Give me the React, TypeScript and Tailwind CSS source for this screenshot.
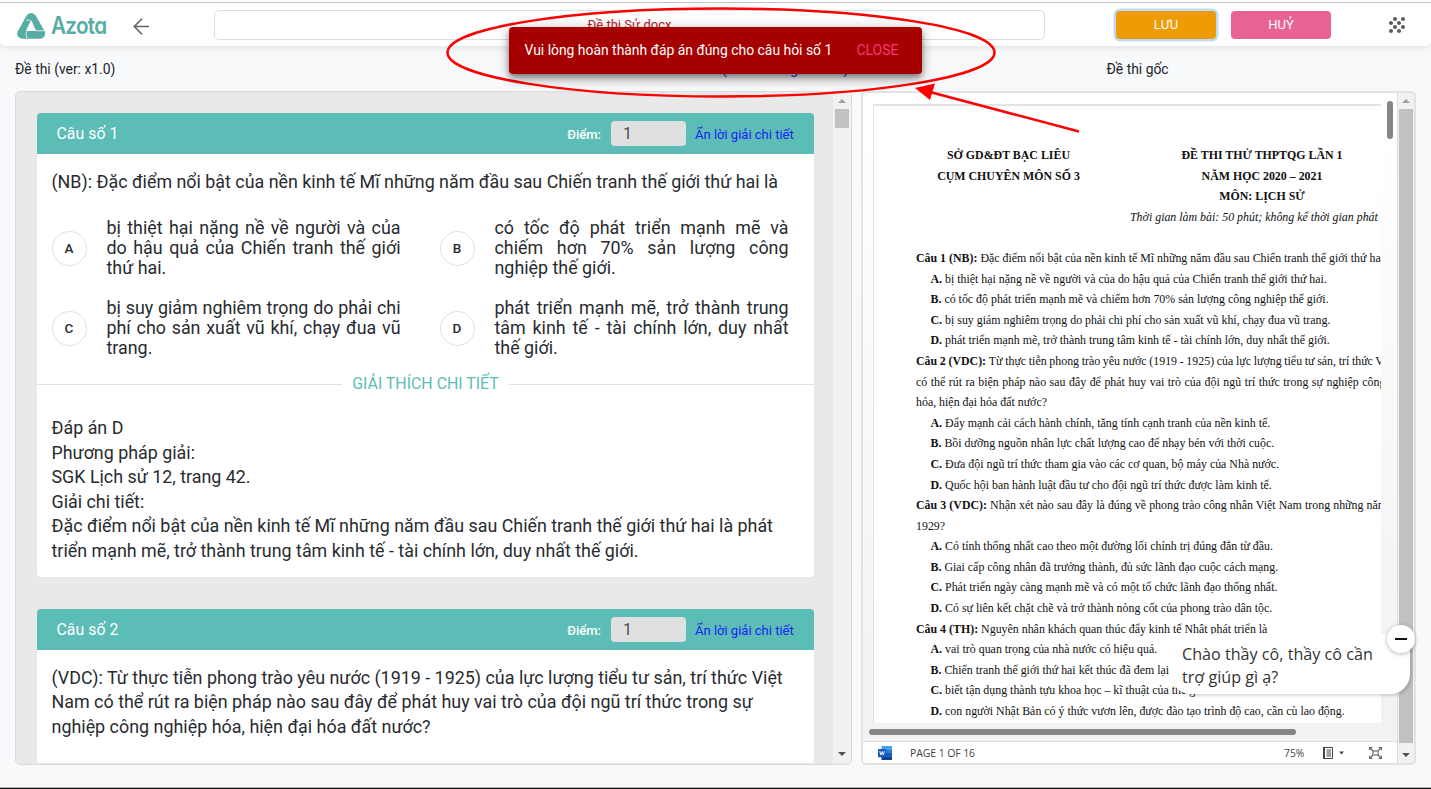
import React from 'react';
import { MdGrain } from 'react-icons/md';

type Option = { letter: string; text: string };

const options: Option[] = [
  { letter: 'A', text: 'bị thiệt hại nặng nề về người và của do hậu quả của Chiến tranh thế giới thứ hai.' },
  { letter: 'B', text: 'có tốc độ phát triển mạnh mẽ và chiếm hơn 70% sản lượng công nghiệp thế giới.' },
  { letter: 'C', text: 'bị suy giảm nghiêm trọng do phải chi phí cho sản xuất vũ khí, chạy đua vũ trang.' },
  { letter: 'D', text: 'phát triển mạnh mẽ, trở thành trung tâm kinh tế - tài chính lớn, duy nhất thế giới.' },
];

type DocLine = { lead?: string; text: string; indent?: boolean; spacing?: string };

const docLines: DocLine[] = [
  { lead: 'Câu 1 (NB):', text: 'Đặc điểm nổi bật của nền kinh tế Mĩ những năm đầu sau Chiến tranh thế giới thứ hai là' },
  { lead: 'A.', text: 'bị thiệt hại nặng nề về người và của do hậu quả của Chiến tranh thế giới thứ hai.', indent: true },
  { lead: 'B.', text: 'có tốc độ phát triển mạnh mẽ và chiếm hơn 70% sản lượng công nghiệp thế giới.', indent: true },
  { lead: 'C.', text: 'bị suy giảm nghiêm trọng do phải chi phí cho sản xuất vũ khí, chạy đua vũ trang.', indent: true },
  { lead: 'D.', text: 'phát triển mạnh mẽ, trở thành trung tâm kinh tế - tài chính lớn, duy nhất thế giới.', indent: true },
  { lead: 'Câu 2 (VDC):', text: 'Từ thực tiễn phong trào yêu nước (1919 - 1925) của lực lượng tiểu tư sản, trí thức Việt Nam', spacing: '[word-spacing:-0.3px]' },
  { text: 'có thể rút ra biện pháp nào sau đây để phát huy vai trò của đội ngũ trí thức trong sự nghiệp công nghiệp', spacing: '[word-spacing:0.55px]' },
  { text: 'hóa, hiện đại hóa đất nước?' },
  { lead: 'A.', text: 'Đẩy mạnh cải cách hành chính, tăng tính cạnh tranh của nền kinh tế.', indent: true },
  { lead: 'B.', text: 'Bồi dưỡng nguồn nhân lực chất lượng cao để nhạy bén với thời cuộc.', indent: true },
  { lead: 'C.', text: 'Đưa đội ngũ trí thức tham gia vào các cơ quan, bộ máy của Nhà nước.', indent: true },
  { lead: 'D.', text: 'Quốc hội ban hành luật đầu tư cho đội ngũ trí thức được làm kinh tế.', indent: true },
  { lead: 'Câu 3 (VDC):', text: 'Nhận xét nào sau đây là đúng về phong trào công nhân Việt Nam trong những năm 1919 -', spacing: '[word-spacing:0.15px]' },
  { text: '1929?' },
  { lead: 'A.', text: 'Có tính thống nhất cao theo một đường lối chính trị đúng đắn từ đầu.', indent: true },
  { lead: 'B.', text: 'Giai cấp công nhân đã trưởng thành, đủ sức lãnh đạo cuộc cách mạng.', indent: true },
  { lead: 'C.', text: 'Phát triển ngày càng mạnh mẽ và có một tổ chức lãnh đạo thống nhất.', indent: true },
  { lead: 'D.', text: 'Có sự liên kết chặt chẽ và trở thành nòng cốt của phong trào dân tộc.', indent: true },
  { lead: 'Câu 4 (TH):', text: 'Nguyên nhân khách quan thúc đẩy kinh tế Nhật phát triển là' },
  { lead: 'A.', text: 'vai trò quan trọng của nhà nước có hiệu quả.', indent: true },
  { lead: 'B.', text: 'Chiến tranh thế giới thứ hai kết thúc đã đem lại', indent: true },
  { lead: 'C.', text: 'biết tận dụng thành tựu khoa học – kĩ thuật của thế giới.', indent: true },
  { lead: 'D.', text: 'con người Nhật Bản có ý thức vươn lên, được đào tạo trình độ cao, cần cù lao động.', indent: true },
];

function Logo() {
  return (
    <div className="flex items-center">
      <svg width="29" height="28" viewBox="0 0 29 28" strokeLinecap="round" strokeLinejoin="round">
        <path d="M14.2 6.2L5.4 21.6H23L14.2 6.2Z" fill="#56ada3" stroke="#56ada3" strokeWidth="10.4" />
        <path d="M14.2 9.6L10 17.8L11 18.4H18.2Z" fill="#fff" stroke="#fff" strokeWidth="1.2" />
        <path d="M14.2 9.2Q12.4 7.4 9.8 8.2M18.4 18.4Q22.5 19.6 26.6 18.6M10.2 18.2Q8 21.6 9.6 25.6" fill="none" stroke="#fff" strokeWidth="0.8" />
      </svg>
      <span className="ml-[5px] w-[56px] origin-left scale-x-[0.86] font-['Inter',sans-serif] text-[24px] leading-7 font-semibold tracking-[-0.8px] text-[#56ada3] [font-feature-settings:'cv11']">
        Azota
      </span>
    </div>
  );
}

function Header() {
  return (
    <header className="flex h-[46px] shrink-0 items-start rounded-b-[5px] border-t border-white bg-white pl-[17px] shadow-[0_2px_6px_rgba(0,0,0,0.09)]">
      <div className="mt-[11px] w-[116px]">
        <Logo />
      </div>
      <svg className="mt-[16px]" width="17" height="18" viewBox="0 0 17 18" fill="none" stroke="#5f6368" strokeWidth="1.6">
        <path d="M16 9.5H1.5M9 1.8L1.3 9.5L9 17.2" />
      </svg>
      <div className="mt-[9px] ml-[64px] flex h-[30px] w-[831px] items-center justify-center rounded-[5px] border border-[#dcdfe2] text-[13px] text-[#b8232f]">
        Đề thi Sử.docx
      </div>
      <button className="mt-[10px] ml-[71px] h-[28px] w-[100px] rounded-[4px] bg-[#ef9b05] text-[13px] text-white shadow-[0_0_0_2.5px_#bfdbfb]">
        LƯU
      </button>
      <button className="mt-[10px] ml-[15px] h-[28px] w-[100px] rounded-[4px] bg-[#e86394] text-[13px] text-white">
        HUỶ
      </button>
      <MdGrain className="mt-[12px] ml-[54px] size-6 text-[#5c5c5c]" />
    </header>
  );
}

function Triangle({ up, dark }: { up?: boolean; dark?: boolean }) {
  return (
    <svg width="8" height="4" viewBox="0 0 8 4" fill={dark ? '#505050' : '#a0a0a0'}>
      <path d={up ? 'M0 4L4 0L8 4Z' : 'M0 0H8L4 4Z'} />
    </svg>
  );
}

function QuestionHeader({ n }: { n: number }) {
  return (
    <div className="flex h-[41px] items-center rounded-t-[4px] bg-[#5bbdb6] pr-[20px] pl-[19.5px] text-[13px] text-white">
      <span className="flex-1 text-[15.9px]">Câu số {n}</span>
      <span className="pt-[2px] font-medium">Điểm:</span>
      <span className="ml-[10px] flex h-[25px] w-[75px] items-center rounded-[4px] bg-[#e0e0e0] pl-[12px] text-[16px] text-[#495057]">1</span>
      <span className="ml-[9px] w-[99px] pt-[2px] whitespace-nowrap text-[#1a22f5]">Ẩn lời giải chi tiết</span>
    </div>
  );
}

function QuestionPanel() {
  return (
    <section className="flex h-[674px] w-[837px] overflow-hidden rounded-[5px] border border-[#d9dcdf] bg-[#e9e9e9] pb-px">
      <div className="flex-1 overflow-hidden pt-[21px] pl-[21px]">
        <article className="h-[464px] w-[777px] rounded-[4px] bg-white text-[17.87px] text-[#272b2f]">
          <QuestionHeader n={1} />
          <p className="h-[56px] pt-[15px] pl-[14.5px] leading-[26px] whitespace-nowrap">
            (NB): Đặc điểm nổi bật của nền kinh tế Mĩ những năm đầu sau Chiến tranh thế giới thứ hai là
          </p>
          <div className="grid grid-cols-[388px_388px] gap-y-[20px] pt-[8px] pl-[14.5px] leading-[20px]">
            {options.map((o) => (
              <div key={o.letter} className="flex items-center">
                <span className="flex size-[35px] items-center justify-center rounded-full border border-[#e1e1e1] text-[13.5px] font-medium">
                  {o.letter}
                </span>
                <p className="ml-[20px] w-[294px] text-justify">{o.text}</p>
              </div>
            ))}
          </div>
          <div className="mt-[14px] flex items-center gap-[10px] text-[15.9px] leading-[24px] text-[#5bbdb6]">
            <span className="h-px flex-1 bg-[#dfe1e3]" />
            GIẢI THÍCH CHI TIẾT
            <span className="h-px flex-1 bg-[#dfe1e3]" />
          </div>
          <div className="pt-[20px] pl-[14.5px] leading-[24.55px] whitespace-nowrap">
            <p>Đáp án D</p>
            <p>Phương pháp giải:</p>
            <p>SGK Lịch sử 12, trang 42.</p>
            <p>Giải chi tiết:</p>
            <p>Đặc điểm nổi bật của nền kinh tế Mĩ những năm đầu sau Chiến tranh thế giới thứ hai là phát</p>
            <p>triển mạnh mẽ, trở thành trung tâm kinh tế - tài chính lớn, duy nhất thế giới.</p>
          </div>
        </article>
        <article className="mt-[32px] h-[200px] w-[777px] rounded-t-[4px] bg-white text-[17.9px] text-[#272b2f]">
          <QuestionHeader n={2} />
          <div className="pt-[15.5px] pl-[14.5px] leading-[24.55px] whitespace-nowrap">
            <p>(VDC): Từ thực tiễn phong trào yêu nước (1919 - 1925) của lực lượng tiểu tư sản, trí thức Việt</p>
            <p>Nam có thể rút ra biện pháp nào sau đây để phát huy vai trò của đội ngũ trí thức trong sự</p>
            <p>nghiệp công nghiệp hóa, hiện đại hóa đất nước?</p>
          </div>
        </article>
      </div>
      <div className="flex w-[18px] flex-col items-center bg-[#f1f1f1] pt-[7px] pb-[7px]">
        <Triangle up />
        <span className="mt-[6px] h-[19px] w-[14px] bg-[#c1c1c1]" />
        <span className="flex-1" />
        <Triangle dark />
      </div>
    </section>
  );
}

function DocumentPage() {
  return (
    <div className="h-[619px] w-[508px] overflow-hidden border-t-2 border-l border-[#e3e3e3] bg-white pt-[39px] pl-[42px] font-['Liberation_Serif',serif] text-[11.9px] leading-[20.6px] whitespace-nowrap text-[#111]">
      <div className="flex font-bold">
        <div className="w-[185px] shrink-0 text-center">
          <p>SỞ GD&amp;ĐT BẠC LIÊU</p>
          <p>CỤM CHUYÊN MÔN SỐ 3</p>
        </div>
        <div className="ml-[29px] w-[264px] shrink-0 text-center">
          <p>ĐỀ THI THỬ THPTQG LẦN 1</p>
          <p>NĂM HỌC 2020 – 2021</p>
          <p>MÔN: LỊCH SỬ</p>
          <p className="text-left font-normal italic">Thời gian làm bài: 50 phút; không kể thời gian phát</p>
        </div>
      </div>
      <div className="mt-[20.6px]">
        {docLines.map((l, i) => (
          <p key={i} className={l.indent ? 'pl-[14.5px]' : l.spacing}>
            {l.lead && <b>{l.lead} </b>}
            {l.text}
          </p>
        ))}
      </div>
    </div>
  );
}

function WordIcon() {
  return (
    <svg width="14" height="14" viewBox="0 0 14 14">
      <rect x="3.5" width="10.5" height="3.7" fill="#41a5ee" />
      <rect x="3.5" y="3.5" width="10.5" height="3.7" fill="#2b7cd3" />
      <rect x="3.5" y="7" width="10.5" height="3.6" fill="#185abd" />
      <rect x="3.5" y="10.4" width="10.5" height="3.6" fill="#103f91" />
      <rect y="3" width="8.3" height="8.3" rx="0.6" fill="#185abd" />
      <path d="M1.7 5.2L2.9 9L4.1 5.4L5.3 9L6.5 5.2" fill="none" stroke="#fff" strokeWidth="0.9" />
    </svg>
  );
}

function DocumentViewer() {
  return (
    <section className="flex h-[674px] w-[555px] overflow-hidden rounded-[5px] border-2 border-[#e1e3e5] bg-[#f1f1f1]">
      <div className="flex w-[535px] flex-col border-r border-[#dcdcdc]">
        <div className="flex h-[648px] flex-col bg-linear-to-b from-white from-5% to-[#f2f2f2] to-95%">
          <div className="flex pt-[11px] pl-[10px]">
            <DocumentPage />
            <span className="-mt-[3px] ml-[6px] h-[38px] w-[6px] rounded-full bg-[#868686]" />
          </div>
          <span className="mt-[6px] ml-[6px] h-[6px] w-[427px] rounded-full bg-[#868686]" />
        </div>
        <footer className="flex h-[22px] items-center border-t border-[#dcdcdc] bg-white pt-px pl-[15px] font-['Open_Sans',sans-serif] text-[10.3px] text-[#444]">
          <WordIcon />
          <span className="ml-[18px] w-[374px] pt-[2px] text-[10.5px] tracking-[-0.1px]">PAGE 1 OF 16</span>
          <span className="w-[39px] pt-[2px]">75%</span>
          <svg width="10" height="12" viewBox="0 0 10 12" fill="none" stroke="#444" strokeWidth="1">
            <path d="M1.5 0.5H9.5V11.5H1.5Z" />
            <path d="M1 0V12" strokeWidth="2" />
            <path d="M3.5 3H8M3.5 5H8M3.5 7H8M3.5 9H8" />
          </svg>
          <svg className="ml-[6px]" width="5" height="4" viewBox="0 0 5 4" fill="#444">
            <path d="M0 0.5H5L2.5 3.5Z" />
          </svg>
          <svg className="ml-[25px]" width="13" height="12" viewBox="0 0 13 12" fill="none" stroke="#666" strokeWidth="1.1">
            <rect x="4" y="4" width="5" height="4" />
            <path d="M0.6 3.2V0.6H3.4M9.6 0.6H12.4V3.2M12.4 8.8V11.4H9.6M3.4 11.4H0.6V8.8M0.6 0.6L4 4M12.4 0.6L9 4M12.4 11.4L9 8M0.6 11.4L4 8" />
          </svg>
        </footer>
      </div>
      <div className="flex w-[16px] flex-col items-center bg-[#f1f1f1] pt-[6px] pb-[6px]">
        <Triangle up />
        <span className="mt-[6px] w-[14px] flex-1 bg-[#c1c1c1]" />
        <span className="mt-[10px] flex">
          <Triangle dark />
        </span>
      </div>
    </section>
  );
}

function Toast() {
  return (
    <div className="absolute top-[27px] left-[509px] flex h-[47px] w-[413px] items-center rounded-[4px] bg-[#a70000] pl-[15.5px] text-[13.9px] whitespace-nowrap text-white shadow-[0_3px_5px_-1px_rgba(0,0,0,0.3),0_6px_10px_rgba(0,0,0,0.25),0_1px_14px_rgba(0,0,0,0.2)]">
      <span className="w-[332px]">Vui lòng hoàn thành đáp án đúng cho câu hỏi số 1</span>
      <span className="text-[#f4387c]">CLOSE</span>
    </div>
  );
}

function ChatBubble() {
  return (
    <div className="absolute top-[634px] left-[1171px] h-[60px] w-[239px] rounded-[20px] rounded-tr-none bg-white pt-[9px] pl-[11px] font-['Open_Sans',sans-serif] text-[16.15px] leading-[22.5px] whitespace-nowrap text-[#333] shadow-[2px_2px_3px_rgba(0,0,0,0.14)]">
      <p>Chào thầy cô, thầy cô cần</p>
      <p>trợ giúp gì ạ?</p>
      <span className="absolute -top-[9px] left-[215.5px] flex size-[28px] items-center justify-center rounded-full bg-white shadow-[0_1px_4px_rgba(0,0,0,0.3)]">
        <span className="h-[2px] w-[12px] bg-[#111]" />
      </span>
    </div>
  );
}

export default function App() {
  return (
    <div className="relative flex h-[789px] w-[1431px] flex-col overflow-hidden bg-[#f8f9fb] font-['Roboto',sans-serif] text-[#212529]">
      <Header />
      <div className="flex h-[45px] items-center pt-px pl-[15px] text-[13.9px]">
        <span className="w-[707px]">Đề thi (ver: x1.0)</span>
        <span className="w-[384.5px] text-[#2a22d8]">(Xem hướng dẫn thi)</span>
        <span>Đề thi gốc</span>
      </div>
      <main className="flex gap-[9px] pl-[15px]">
        <QuestionPanel />
        <DocumentViewer />
      </main>
      <div className="mt-auto h-[2px] border-t border-[#b5b5b5] bg-[#151515]" />
      <span className="absolute top-[2px] left-0 h-px w-full bg-[#c4c4c4]" />
      <svg className="absolute top-0 left-[440px]" width="650" height="140" viewBox="440 0 650 140" fill="none" stroke="#fb0204" strokeWidth="2.5">
        <ellipse cx="721" cy="52.5" rx="273.5" ry="44" />
        <path d="M1079 131.5L928 91.5" />
        <path d="M915 88L935 83.5L930 100Z" fill="#fb0204" stroke="none" />
      </svg>
      <Toast />
      <ChatBubble />
    </div>
  );
}
